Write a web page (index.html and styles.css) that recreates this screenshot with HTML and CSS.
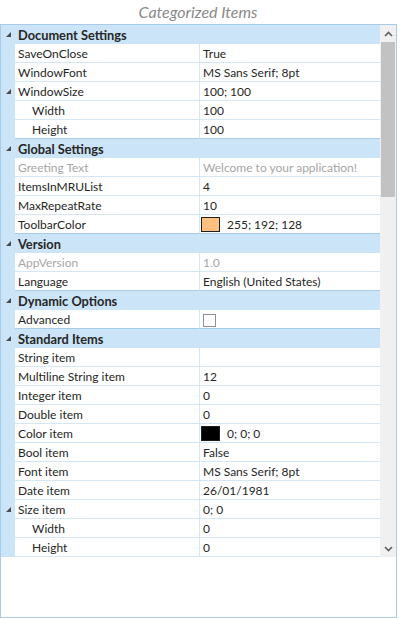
FILE: index.html
```html
<!DOCTYPE html>
<html lang="en">
<head>
    <meta charset="UTF-8">
    <meta name="viewport" content="width=device-width, initial-scale=1.0">
    <title>Categorized Items</title>
    <link rel="stylesheet" href="styles.css">
</head>
<body>

    <div class="caption">Categorized Items</div>

    <div class="panel">
        <div class="view">
            <div class="grid">

                <div class="cat"><span class="tog"></span>Document Settings</div>
                <div class="row"><div class="gut"></div><div class="name">SaveOnClose</div><div class="val">True</div></div>
                <div class="row"><div class="gut"></div><div class="name">WindowFont</div><div class="val">MS Sans Serif; 8pt</div></div>
                <div class="row"><div class="gut"><span class="tog"></span></div><div class="name">WindowSize</div><div class="val">100; 100</div></div>
                <div class="row"><div class="gut"></div><div class="name sub">Width</div><div class="val">100</div></div>
                <div class="row last"><div class="gut"></div><div class="name sub">Height</div><div class="val">100</div></div>

                <div class="cat"><span class="tog"></span>Global Settings</div>
                <div class="row off"><div class="gut"></div><div class="name">Greeting Text</div><div class="val">Welcome to your application!</div></div>
                <div class="row"><div class="gut"></div><div class="name">ItemsInMRUList</div><div class="val">4</div></div>
                <div class="row"><div class="gut"></div><div class="name">MaxRepeatRate</div><div class="val">10</div></div>
                <div class="row last"><div class="gut"></div><div class="name">ToolbarColor</div><div class="val"><span class="swatch orange"></span>255; 192; 128</div></div>

                <div class="cat"><span class="tog"></span>Version</div>
                <div class="row off"><div class="gut"></div><div class="name">AppVersion</div><div class="val">1.0</div></div>
                <div class="row last"><div class="gut"></div><div class="name">Language</div><div class="val">English (United States)</div></div>

                <div class="cat"><span class="tog"></span>Dynamic Options</div>
                <div class="row last"><div class="gut"></div><div class="name">Advanced</div><div class="val"><span class="check"></span></div></div>

                <div class="cat"><span class="tog"></span>Standard Items</div>
                <div class="row"><div class="gut"></div><div class="name">String item</div><div class="val"></div></div>
                <div class="row"><div class="gut"></div><div class="name">Multiline String item</div><div class="val">12</div></div>
                <div class="row"><div class="gut"></div><div class="name">Integer item</div><div class="val">0</div></div>
                <div class="row"><div class="gut"></div><div class="name">Double item</div><div class="val">0</div></div>
                <div class="row"><div class="gut"></div><div class="name">Color item</div><div class="val"><span class="swatch black"></span>0; 0; 0</div></div>
                <div class="row"><div class="gut"></div><div class="name">Bool item</div><div class="val">False</div></div>
                <div class="row"><div class="gut"></div><div class="name">Font item</div><div class="val">MS Sans Serif; 8pt</div></div>
                <div class="row"><div class="gut"></div><div class="name">Date item</div><div class="val">26/01/1981</div></div>
                <div class="row"><div class="gut"><span class="tog"></span></div><div class="name">Size item</div><div class="val">0; 0</div></div>
                <div class="row"><div class="gut"></div><div class="name sub">Width</div><div class="val">0</div></div>
                <div class="row"><div class="gut"></div><div class="name sub">Height</div><div class="val">0</div></div>

            </div>

            <div class="scrollbar">
                <div class="arrow">
                    <svg width="9" height="6" viewBox="0 0 9 6"><path d="M1 5 L4.5 1.5 L8 5" fill="none" stroke="#606060" stroke-width="1.6"/></svg>
                </div>
                <div class="track"><div class="thumb"></div></div>
                <div class="arrow">
                    <svg width="9" height="6" viewBox="0 0 9 6"><path d="M1 1 L4.5 4.5 L8 1" fill="none" stroke="#606060" stroke-width="1.6"/></svg>
                </div>
            </div>
        </div>
    </div>

</body>
</html>
```

FILE: styles.css
```css
body {
    margin: 0;
    background-color: white;
    font-family: Lato, "Open Sans", sans-serif;
    font-size: 12px;
    color: #262626;
}

.caption {
    height: 24px;
    line-height: 24px;
    text-align: center;
    font-size: 16px;
    font-style: italic;
    color: #8a8a8a;
    padding-right: 4px;
}

.panel {
    width: 395px;
    height: 592px;
    border: 1px solid #a9cbe8;
}

.view {
    display: flex;
}

.grid {
    width: 379px;
}

/* category header spans the whole width */
.cat {
    display: flex;
    align-items: center;
    height: 19px;
    background-color: #cce4f7;
    font-weight: bold;
    font-size: 12.8px;
    padding-left: 3px;
}

.cat .tog {
    margin: 0 7px 0 2px;
}

.row {
    display: grid;
    grid-template-columns: 14px 185px 180px;
    height: 19px;
}

.gut {
    display: flex;
    align-items: center;
    background-color: #cce4f7;
    padding-left: 5px;
}

.name,
.val {
    display: flex;
    align-items: center;
    border-bottom: 1px solid #d5e6f5;
    white-space: nowrap;
    overflow: hidden;
}

.name {
    padding-left: 3px;
    border-right: 1px solid #d5e6f5;
}

.name.sub {
    padding-left: 17px;
}

.val {
    padding-left: 3px;
}

.row.last .name,
.row.last .val {
    border-bottom-color: #a9cbe8;
}

.row.off .name,
.row.off .val {
    color: #a6a6a6;
}

/* little expanded-node triangle */
.tog {
    display: inline-block;
    width: 0;
    height: 0;
    border-left: 5px solid transparent;
    border-bottom: 5px solid #4a4a4a;
}

.swatch {
    width: 17px;
    height: 13px;
    border: 1px solid #1e1e1e;
    margin: 0 7px 0 -2px;
}

.swatch.orange {
    background-color: #ffc080;
}

.swatch.black {
    background-color: black;
}

.check {
    width: 11px;
    height: 11px;
    border: 1px solid #8f8f8f;
    margin-top: 2px;
}

.scrollbar {
    width: 16px;
    display: flex;
    flex-direction: column;
    background-color: #f0f0f0;
}

.arrow {
    height: 17px;
    display: flex;
    align-items: center;
    justify-content: center;
}

.track {
    flex: 1;
    padding: 0 1px;
}

.thumb {
    height: 155px;
    background-color: #c2c2c2;
}
```
